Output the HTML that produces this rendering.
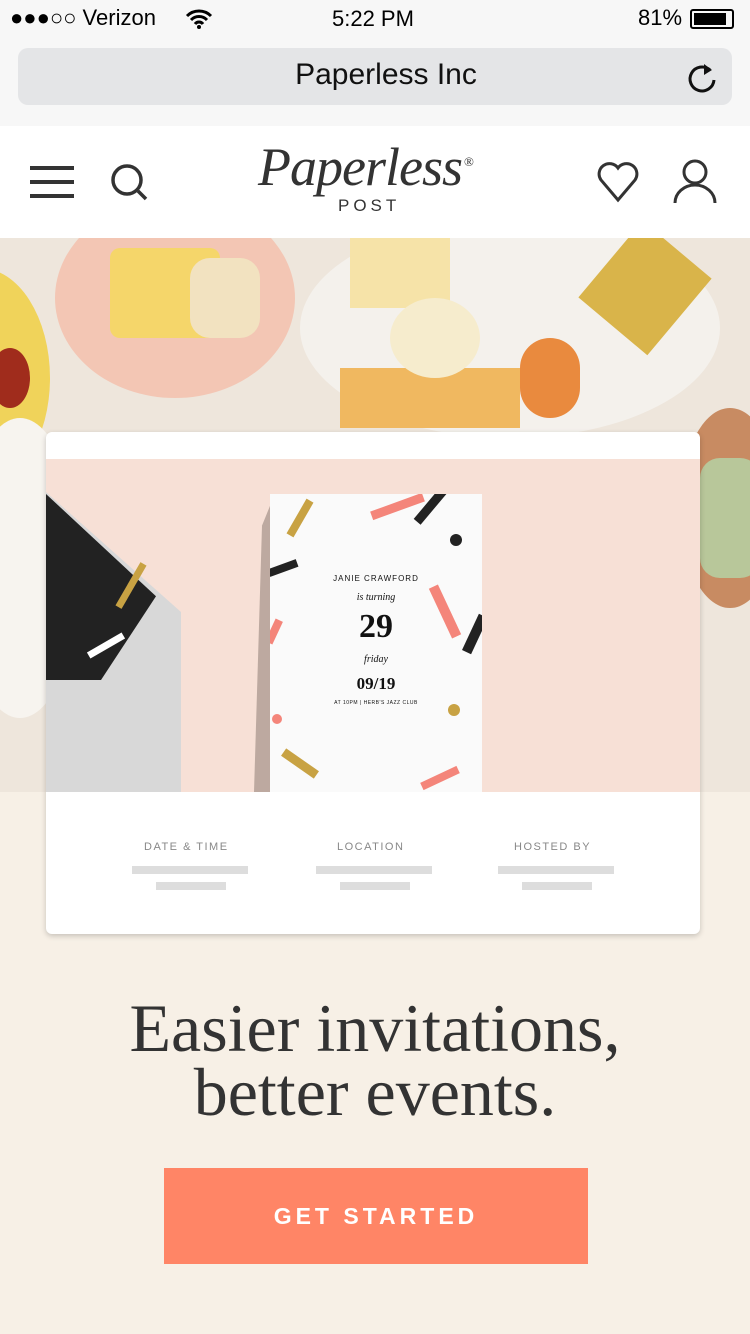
<!DOCTYPE html>
<html><head><meta charset="utf-8"><style>
*{margin:0;padding:0;box-sizing:border-box}
body{width:750px;height:1334px;overflow:hidden;background:#f7f0e6;font-family:"Liberation Sans",sans-serif;position:relative}
.abs{position:absolute}
.c{position:absolute}
</style></head><body>
<div class="abs" style="left:0;top:0;width:750px;height:126px;background:#f7f7f7"></div>
<div class="abs" style="left:10px;top:5px;font-size:22px;color:#000">●●●○○ Verizon</div>
<svg class="abs" style="left:184px;top:8px" width="30" height="22" viewBox="0 0 30 22"><path d="M3 8a17 17 0 0 1 24 0M7 12a11 11 0 0 1 16 0M11 16a5 5 0 0 1 8 0" stroke="#000" stroke-width="3" fill="none"/><circle cx="15" cy="19" r="2" fill="#000"/></svg>
<div class="abs" style="left:332px;top:6px;font-size:22px">5:22 PM</div>
<div class="abs" style="left:638px;top:5px;font-size:22px">81%</div>
<div class="abs" style="left:690px;top:9px;width:44px;height:20px;border:2px solid #000;border-radius:3px"><div style="margin:2px;width:32px;height:12px;background:#000"></div></div>
<div class="abs" style="left:18px;top:48px;width:714px;height:57px;background:#e4e5e7;border-radius:10px"></div>
<div class="abs" style="left:0;top:58px;width:772px;text-align:center;font-size:30px;color:#111">Paperless Inc</div>
<svg class="abs" style="left:686px;top:60px" width="32" height="34" viewBox="0 0 32 34"><path d="M24 10A12 12 0 1 0 28 20" stroke="#111" stroke-width="3" fill="none"/><path d="M18 4l8 6-8 5z" fill="#111"/></svg>
<div class="abs" style="left:0;top:126px;width:750px;height:112px;background:#fff"></div>
<div class="abs" style="left:30px;top:166px;width:44px;height:4px;background:#333;box-shadow:0 14px 0 #333,0 28px 0 #333"></div>
<svg class="abs" style="left:108px;top:160px" width="44" height="44"><circle cx="19" cy="20" r="14" stroke="#333" stroke-width="3.5" fill="none"/><path d="M30 31l8 8" stroke="#333" stroke-width="3.5"/></svg>
<div class="abs" style="left:258px;top:136px;font-family:'Liberation Serif',serif;font-style:italic;font-size:54px;color:#333;letter-spacing:-1px">Paperless<span style="font-size:13px;font-style:normal;vertical-align:top;position:relative;top:18px;left:2px">®</span></div>
<div class="abs" style="left:338px;top:196px;font-size:17px;letter-spacing:4px;color:#333">POST</div>
<svg class="abs" style="left:596px;top:160px" width="44" height="44" viewBox="0 0 44 44"><path d="M22 40L5 20A10 10 0 0 1 22 8 10 10 0 0 1 39 20z" stroke="#333" stroke-width="3" fill="none"/></svg>
<svg class="abs" style="left:672px;top:158px" width="46" height="48" viewBox="0 0 46 48"><circle cx="23" cy="14" r="11" stroke="#333" stroke-width="3" fill="none"/><path d="M3 45a20 18 0 0 1 40 0" stroke="#333" stroke-width="3" fill="none"/></svg>
<div class="abs" style="left:0;top:238px;width:750px;height:554px;background:#eee6dc;overflow:hidden">
<div class="abs" style="left:55px;top:-40px;width:240px;height:200px;border-radius:50%;background:#f3c6b4"></div>
<div class="abs" style="left:110px;top:10px;width:110px;height:90px;background:#f5d66a;border-radius:10px"></div>
<div class="abs" style="left:190px;top:20px;width:70px;height:80px;background:#f2e2c0;border-radius:20px"></div>
<div class="abs" style="left:-90px;top:30px;width:140px;height:220px;border-radius:50%;background:#f0d35a"></div>
<div class="abs" style="left:-10px;top:110px;width:40px;height:60px;border-radius:50%;background:#a02c1c"></div>
<div class="abs" style="left:300px;top:-20px;width:420px;height:220px;border-radius:50%;background:#f4f1ec"></div>
<div class="abs" style="left:340px;top:130px;width:180px;height:60px;background:#f0b860"></div>
<div class="abs" style="left:350px;top:0;width:100px;height:70px;background:#f6e3a8"></div>
<div class="abs" style="left:390px;top:60px;width:90px;height:80px;border-radius:50%;background:#f6eccd"></div>
<div class="abs" style="left:520px;top:100px;width:60px;height:80px;background:#e98a3e;border-radius:30px"></div>
<div class="abs" style="left:600px;top:0;width:90px;height:100px;background:#d9b44a;transform:rotate(40deg)"></div>
<div class="abs" style="left:680px;top:170px;width:100px;height:200px;border-radius:50%;background:#c88b62"></div>
<div class="abs" style="left:700px;top:220px;width:60px;height:120px;background:#b8c79a;border-radius:20px"></div>
<div class="abs" style="left:-40px;top:180px;width:120px;height:300px;border-radius:50%;background:#f7f4ef"></div>
</div>
<div class="abs" style="left:46px;top:432px;width:654px;height:502px;background:#fff;border-radius:6px;box-shadow:0 2px 6px rgba(0,0,0,.2);overflow:hidden">
<div class="abs" style="left:0;top:27px;width:654px;height:333px;background:#f7e0d6"></div>
<div class="abs" style="left:0;top:60px;width:135px;height:300px;background:#d8d8d8;clip-path:polygon(0 0,100% 40%,100% 100%,0 100%)"></div>
<div class="abs" style="left:0;top:62px;width:110px;height:186px;background:#222;clip-path:polygon(0 0,100% 55%,50% 100%,0 100%)"></div>
<div class="abs" style="left:60px;top:150px;width:50px;height:7px;background:#c8a243;transform:rotate(-60deg)"></div>
<div class="abs" style="left:40px;top:210px;width:40px;height:7px;background:#fff;transform:rotate(-30deg)"></div>
<div class="abs" style="left:208px;top:64px;width:20px;height:296px;background:#bda9a0;clip-path:polygon(100% 0,100% 100%,0 100%,40% 10%)"></div>
<div class="abs" style="left:224px;top:62px;width:212px;height:298px;background:#fafafa;text-align:center;color:#111;overflow:hidden">
<div class="c" style="left:10px;top:20px;width:40px;height:8px;background:#c8a243;transform:rotate(-60deg)"></div>
<div class="c" style="left:-2px;top:70px;width:30px;height:8px;background:#222;transform:rotate(-20deg)"></div>
<div class="c" style="left:140px;top:8px;width:40px;height:9px;background:#222;transform:rotate(-50deg)"></div>
<div class="c" style="left:100px;top:8px;width:55px;height:9px;background:#f4857a;transform:rotate(-20deg)"></div>
<div class="c" style="left:170px;top:90px;width:10px;height:55px;background:#f4857a;transform:rotate(-25deg)"></div>
<div class="c" style="left:200px;top:120px;width:10px;height:40px;background:#222;transform:rotate(25deg)"></div>
<div class="c" style="left:0;top:125px;width:8px;height:25px;background:#f4857a;transform:rotate(25deg)"></div>
<div class="c" style="left:180px;top:40px;width:12px;height:12px;border-radius:50%;background:#222"></div>
<div class="c" style="left:178px;top:210px;width:12px;height:12px;border-radius:50%;background:#c8a243"></div>
<div class="c" style="left:2px;top:220px;width:10px;height:10px;border-radius:50%;background:#f4857a"></div>
<div class="c" style="left:10px;top:265px;width:40px;height:9px;background:#c8a243;transform:rotate(35deg)"></div>
<div class="c" style="left:150px;top:280px;width:40px;height:8px;background:#f4857a;transform:rotate(-25deg)"></div>
<div class="c" style="left:0;top:80px;width:212px;font-size:8px;letter-spacing:1px">JANIE CRAWFORD</div>
<div class="c" style="left:0;top:98px;width:212px;font-family:'Liberation Serif',serif;font-style:italic;font-size:10px">is turning</div>
<div class="c" style="left:0;top:114px;width:212px;font-family:'Liberation Serif',serif;font-weight:bold;font-size:34px">29</div>
<div class="c" style="left:0;top:160px;width:212px;font-family:'Liberation Serif',serif;font-style:italic;font-size:10px">friday</div>
<div class="c" style="left:0;top:180px;width:212px;font-family:'Liberation Serif',serif;font-weight:bold;font-size:17px">09/19</div>
<div class="c" style="left:0;top:206px;width:212px;font-size:5px;letter-spacing:.5px">AT 10PM | HERB'S JAZZ CLUB</div>
</div>
<div class="abs" style="left:0;top:409px;width:654px;font-size:11px;letter-spacing:1.5px;color:#888">
<span class="abs" style="left:98px">DATE &amp; TIME</span><span class="abs" style="left:291px">LOCATION</span><span class="abs" style="left:468px">HOSTED BY</span></div>
<div class="abs" style="left:86px;top:434px;width:116px;height:8px;background:#ddd"></div>
<div class="abs" style="left:110px;top:450px;width:70px;height:8px;background:#ddd"></div>
<div class="abs" style="left:270px;top:434px;width:116px;height:8px;background:#ddd"></div>
<div class="abs" style="left:294px;top:450px;width:70px;height:8px;background:#ddd"></div>
<div class="abs" style="left:452px;top:434px;width:116px;height:8px;background:#ddd"></div>
<div class="abs" style="left:476px;top:450px;width:70px;height:8px;background:#ddd"></div>
</div>
<div class="abs" style="left:0;top:996px;width:750px;text-align:center;font-family:'Liberation Serif',serif;font-size:68px;line-height:64px;color:#333">Easier invitations,<br>better events.</div>
<div class="abs" style="left:164px;top:1168px;width:424px;height:96px;background:#ff8566;color:#fff;text-align:center;line-height:96px;font-size:23px;letter-spacing:4px;font-weight:bold">GET STARTED</div>
</body></html>
